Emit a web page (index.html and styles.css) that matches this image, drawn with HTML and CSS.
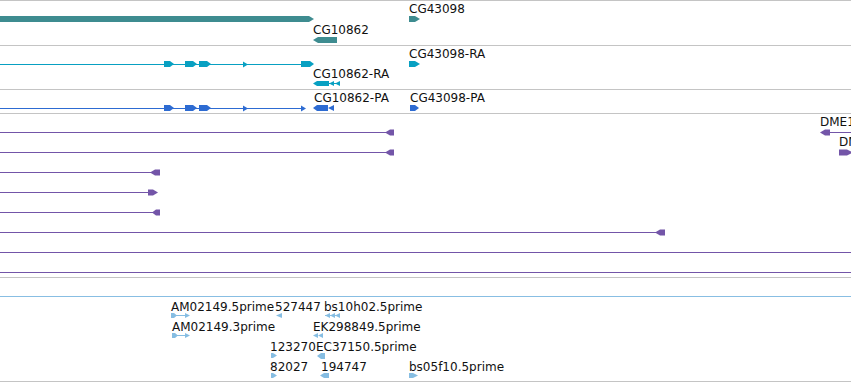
FILE: index.html
```html
<!DOCTYPE html>
<html lang="en">
<head>
  <meta charset="UTF-8" />
  <title>Track view</title>
  <link rel="stylesheet" href="styles.css">
</head>
<body>
<div class="view">

  <!-- genes -->
  <div class="track">
    <svg width="851" height="44" viewBox="0 1 851 44" class="genes">
      <polygon points="0,16 309,16 314,19 309,22 0,22"/>
      <text x="313" y="34">CG10862</text>
      <polygon points="313,40 318,37 337,37 337,43 318,43"/>
      <text x="409" y="13">CG43098</text>
      <polygon points="409,16 415,16 420,19 415,22 409,22"/>
    </svg>
  </div>

  <!-- transcripts -->
  <div class="track">
    <svg width="851" height="43" viewBox="0 46 851 43" class="mrna">
      <line x1="0" y1="64.5" x2="302" y2="64.5"/>
      <polygon points="164,61 170,61 174,64 170,67 164,67"/>
      <polygon points="185,61 193,61 197,64 193,67 185,67"/>
      <polygon points="199,61 207,61 211,64 207,67 199,67"/>
      <polygon points="243,61.5 248,64.5 243,67.5"/>
      <polygon points="301,61 310,61 314,64 310,67 301,67"/>
      <text x="313" y="78">CG10862-RA</text>
      <line x1="328" y1="83.5" x2="340" y2="83.5"/>
      <polygon points="313,83.5 317,81 329,81 329,86 317,86"/>
      <polygon points="329,83.5 334,81 334,86"/>
      <polygon points="335,83.5 340,81 340,86"/>
      <text x="409" y="58">CG43098-RA</text>
      <polygon points="409,61 415,61 420,64 415,67 409,67"/>
    </svg>
  </div>

  <!-- proteins -->
  <div class="track">
    <svg width="851" height="23" viewBox="0 90 851 23" class="cds">
      <line x1="0" y1="108.5" x2="303" y2="108.5"/>
      <polygon points="164,105 170,105 174,108 170,111 164,111"/>
      <polygon points="185,105 193,105 197,108 193,111 185,111"/>
      <polygon points="199,105 207,105 211,108 207,111 199,111"/>
      <polygon points="243,105.5 248,108.5 243,111.5"/>
      <polygon points="301,105.5 306,108.5 301,111.5"/>
      <text x="314" y="102">CG10862-PA</text>
      <polygon points="313,108 317,105 328,105 328,111 317,111"/>
      <polygon points="328,108 334,105 334,111"/>
      <text x="410" y="102">CG43098-PA</text>
      <polygon points="410,105 415,105 419,108 415,111 410,111"/>
    </svg>
  </div>

  <!-- alignments -->
  <div class="track">
    <svg width="851" height="163" viewBox="0 114 851 163" class="aln">
      <line x1="0" y1="132.5" x2="386" y2="132.5"/>
      <polygon points="385,132.5 390,129.5 394,129.5 394,135.5 390,135.5"/>
      <text x="820" y="126">DME1</text>
      <line x1="828" y1="132.5" x2="851" y2="132.5"/>
      <polygon points="820,132.5 825,129.5 830,129.5 830,135.5 825,135.5"/>

      <line x1="0" y1="152.5" x2="386" y2="152.5"/>
      <polygon points="385,152.5 390,149.5 394,149.5 394,155.5 390,155.5"/>
      <text x="839" y="146">DME1</text>
      <polygon points="839,149.5 847,149.5 853,152.5 847,155.5 839,155.5"/>

      <line x1="0" y1="172.5" x2="151" y2="172.5"/>
      <polygon points="150,172.5 155,169.5 160,169.5 160,175.5 155,175.5"/>

      <line x1="0" y1="192.5" x2="149" y2="192.5"/>
      <polygon points="148,189.5 153,189.5 158,192.5 153,195.5 148,195.5"/>

      <line x1="0" y1="212.5" x2="153" y2="212.5"/>
      <polygon points="152,212.5 156,209.5 160,209.5 160,215.5 156,215.5"/>

      <line x1="0" y1="232.5" x2="656" y2="232.5"/>
      <polygon points="655,232.5 660,229.5 665,229.5 665,235.5 660,235.5"/>

      <line x1="0" y1="252.5" x2="851" y2="252.5"/>
      <line x1="0" y1="272.5" x2="851" y2="272.5"/>
    </svg>
  </div>

  <div class="gap"></div>

  <!-- ESTs -->
  <div class="track est">
    <svg width="851" height="84" viewBox="0 297 851 84" class="ests">
      <text x="171" y="311">AM02149.5prime</text>
      <text x="275" y="311">527447</text>
      <text x="324" y="311">bs10h02.5prime</text>
      <line x1="175" y1="315.5" x2="186" y2="315.5"/>
      <polygon points="171,313 174,313 177,315.5 174,318 171,318"/>
      <polygon points="185,313 190,315.5 185,318"/>
      <polygon points="276,315.5 282,313 282,318"/>
      <line x1="325" y1="315.5" x2="340" y2="315.5"/>
      <polygon points="325,315.5 330,313 330,318"/>
      <polygon points="330,315.5 335,313 335,318"/>
      <polygon points="335,315.5 340,313 340,318"/>

      <text x="172" y="331">AM02149.3prime</text>
      <text x="313" y="331">EK298849.5prime</text>
      <line x1="175" y1="335.5" x2="186" y2="335.5"/>
      <polygon points="172,333 175,333 178,335.5 175,338 172,338"/>
      <polygon points="185,333 190,335.5 185,338"/>
      <polygon points="313,335.5 318,333 318,338"/>
      <polygon points="318,335.5 323,333 323,338"/>

      <text x="270" y="351">123270</text>
      <text x="316" y="351">EC37150.5prime</text>
      <polygon points="271,353 273,353 277,355.5 273,358 271,358"/>
      <polygon points="317,356 321,353 325,353 325,359 321,359"/>

      <text x="270" y="371">82027</text>
      <text x="321" y="371">194747</text>
      <text x="409" y="371">bs05f10.5prime</text>
      <polygon points="271,373 273,373 277,375.5 273,378 271,378"/>
      <polygon points="320,375.5 324,373 329,373 329,378 324,378"/>
      <polygon points="409,373 413,373 418,375.5 413,378 409,378"/>
    </svg>
  </div>

</div>
</body>
</html>
```

FILE: styles.css
```css
body {
  margin: 0;
  background: #fff;
  overflow: hidden;
}
.view {
  width: 851px;
  border-top: 1px solid #c4c4c4;
}
.track {
  border-bottom: 1px solid #c4c4c4;
}
.track svg {
  display: block;
}
.gap {
  height: 18px;
}
.track.est {
  border-top: 1px solid #88bee3;
}
svg text {
  font-family: "DejaVu Sans", sans-serif;
  font-size: 12px;
  fill: #111;
  stroke: none;
}
svg line {
  stroke-width: 1;
}
.genes polygon { fill: #3e8c90; }
.mrna polygon { fill: #08a0c2; }
.mrna line { stroke: #08a0c2; }
.cds polygon { fill: #2d6bd2; }
.cds line { stroke: #2d6bd2; }
.aln polygon { fill: #7355a8; }
.aln line { stroke: #7355a8; }
.ests polygon { fill: #86bde2; }
.ests line { stroke: #86bde2; }
```
